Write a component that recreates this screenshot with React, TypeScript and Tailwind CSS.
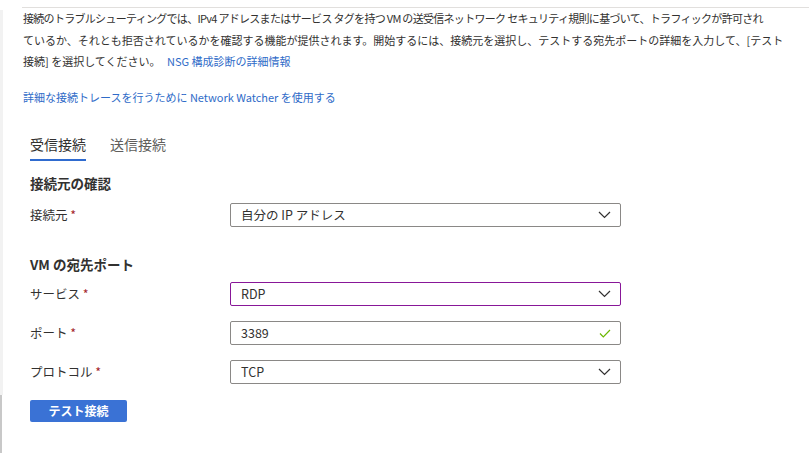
import React from 'react'

const font = { fontFamily: '"Noto Sans CJK JP", "Noto Sans", sans-serif' }

const Chevron = () => (
  <svg width="13" height="8" viewBox="0 0 13 8" className="shrink-0">
    <polyline points="1,1 6.5,6.5 12,1" fill="none" stroke="#323130" strokeWidth="1.2" />
  </svg>
)

const Check = () => (
  <svg width="12" height="9" viewBox="0 0 12 9" className="shrink-0">
    <polyline points="1,4.5 4.3,7.8 11,1" fill="none" stroke="#6bb700" strokeWidth="1.2" />
  </svg>
)

const Required = () => <span className="text-[#a4262c]"> *</span>

type FieldProps = {
  label: string
  value: string
  focused?: boolean
  icon: 'chevron' | 'check'
  className?: string
}

const Field = ({ label, value, focused, icon, className }: FieldProps) => (
  <div className={`flex items-center ${className ?? ''}`}>
    <div className="w-[200px] text-[12.5px] text-[#323130]">
      {label}
      <Required />
    </div>
    <div
      className={`w-[391px] h-[24px] flex items-center justify-between pl-[10px] pr-[9px] rounded-[2px] border ${
        focused ? 'border-[#881798]' : 'border-[#8a8886]'
      }`}
    >
      <span className="text-[12.5px] text-[#323130]">{value}</span>
      {icon === 'chevron' ? <Chevron /> : <Check />}
    </div>
  </div>
)

const App = () => {
  return (
    <div className="w-[809px] h-[453px] bg-white flex overflow-hidden" style={font}>
      <div className="w-[3px] flex flex-col">
        <div className="h-[10px]" />
        <div className="h-[385px] bg-[#f2f2f2]" />
        <div className="flex-1 bg-[#c8c8c8] w-[2px]" />
      </div>
      <div className="flex-1 pl-[19px]">
        <div className="mt-[7px] h-px bg-[#e1dfdd]" />
        <p className="pl-px text-[11px] leading-[21.5px] text-[#323130] whitespace-nowrap">
          <span className="tracking-[-0.7px]">
            接続のトラブルシューティングでは、IPv4 アドレスまたはサービス タグを持つ VM の送受信ネットワーク セキュリティ規則に基づいて、トラフィックが許可され
          </span>
          <br />
          ているか、それとも拒否されているかを確認する機能が提供されます。開始するには、接続元を選択し、テストする宛先ポートの詳細を入力して、[テスト
          <br />
          接続] を選択してください。 <span className="ml-[4px] text-[#2f6bc8]">NSG 構成診断の詳細情報</span>
        </p>
        <p className="pl-px mt-[14px] text-[11px] leading-[21.5px] text-[#2f6bc8]">
          詳細な接続トレースを行うために Network Watcher を使用する
        </p>

        <div className="pl-[8px]">
          <div className="mt-[26px] flex gap-[24px] text-[14px] leading-[20px]">
            <div className="flex flex-col">
              <span className="text-[#323130]">受信接続</span>
              <span className="mt-[5px] h-[2px] bg-[#2f6bcf]" />
            </div>
            <span className="text-[#605e5c]">送信接続</span>
          </div>

          <h2 className="mt-[12px] text-[13.5px] leading-[20px] font-semibold text-[#323130]">接続元の確認</h2>
          <Field className="mt-[10px]" label="接続元" value="自分の IP アドレス" icon="chevron" />

          <h2 className="mt-[27px] text-[13.5px] leading-[20px] font-semibold text-[#323130]">VM の宛先ポート</h2>
          <Field className="mt-[8px]" label="サービス" value="RDP" focused icon="chevron" />
          <Field className="mt-[15px]" label="ポート" value="3389" icon="check" />
          <Field className="mt-[15px]" label="プロトコル" value="TCP" icon="chevron" />

          <button className="mt-[16px] w-[97px] h-[22px] rounded-[2px] bg-[#3a72d5] text-white text-[12px] font-bold flex items-center justify-center">
            テスト接続
          </button>
        </div>
      </div>
    </div>
  )
}

export default App
